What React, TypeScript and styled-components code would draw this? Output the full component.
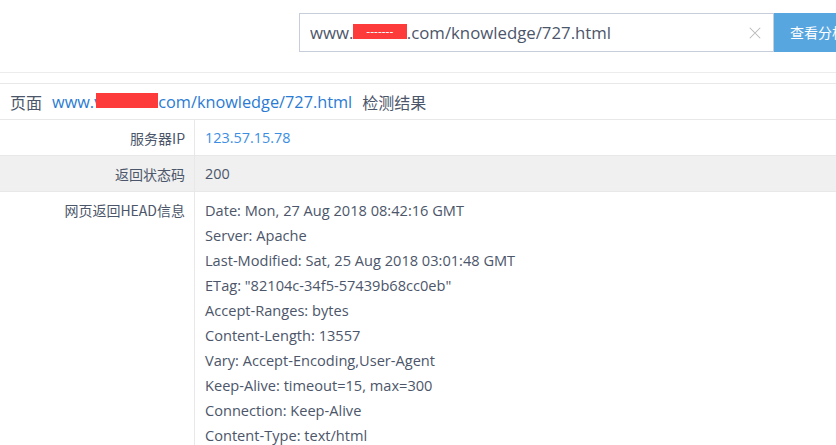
import styled, { createGlobalStyle } from 'styled-components';

const GlobalStyle = createGlobalStyle`
  html, body {
    margin: 0;
    padding: 0;
    background: #fff;
    overflow: hidden;
  }
  body {
    font-family: "Open Sans", "Noto Sans CJK SC", sans-serif;
    color: #4c566a;
  }
`;

const headers = [
  'Date: Mon, 27 Aug 2018 08:42:16 GMT',
  'Server: Apache',
  'Last-Modified: Sat, 25 Aug 2018 03:01:48 GMT',
  'ETag: "82104c-34f5-57439b68cc0eb"',
  'Accept-Ranges: bytes',
  'Content-Length: 13557',
  'Vary: Accept-Encoding,User-Agent',
  'Keep-Alive: timeout=15, max=300',
  'Connection: Keep-Alive',
  'Content-Type: text/html',
];

const App = () => (
  <Page>
    <GlobalStyle />
    <TopBar>
      <SearchBox>
        <InputText>
          www.v<Mask>-------</Mask>.com/knowledge/727.html
        </InputText>
        <ClearIcon viewBox="0 0 16 16">
          <path d="M2 2L14 14M14 2L2 14" stroke="#b8b8b8" strokeWidth="1.2" />
        </ClearIcon>
      </SearchBox>
      <SearchButton>查看分析</SearchButton>
    </TopBar>
    <Result>
      <Title>
        页面
        <TitleLink>
          www.v<Mask $inline>-------</Mask>com/knowledge/727.html
        </TitleLink>
        检测结果
      </Title>
      <Row>
        <Label>服务器IP</Label>
        <Value $blue>123.57.15.78</Value>
      </Row>
      <Row $shaded>
        <Label>返回状态码</Label>
        <Value>200</Value>
      </Row>
      <Row>
        <Label>网页返回HEAD信息</Label>
        <HeadList>
          {headers.map((h) => (
            <HeadLine key={h}>{h}</HeadLine>
          ))}
        </HeadList>
      </Row>
    </Result>
  </Page>
);

const Page = styled.div`
  width: 836px;
  height: 445px;
  overflow: hidden;
`;

const TopBar = styled.div`
  display: flex;
  justify-content: flex-end;
  height: 73px;
  padding-top: 13px;
  box-sizing: border-box;
  border-bottom: 1px solid #ececec;
  margin-right: -70px;
`;

const SearchBox = styled.div`
  width: 475px;
  height: 39px;
  box-sizing: border-box;
  border: 1px solid #c6cedb;
  display: flex;
  align-items: center;
  padding: 0 10px;
  position: relative;
`;

const InputText = styled.div`
  flex: 1;
  font-size: 16.8px;
  color: #4c566a;
  white-space: nowrap;
`;

const Mask = styled.span<{ $inline?: boolean }>`
  display: inline-block;
  background: #fe3b3b;
  color: #fff;
  font-size: 12px;
  line-height: 15px;
  height: 15px;
  width: ${(p) => (p.$inline ? '62px' : '54px')};
  margin-left: ${(p) => (p.$inline ? '-6px' : '-9px')};
  text-align: center;
  vertical-align: 0px;
  overflow: hidden;
  ${(p) => p.$inline && 'color: transparent;'}
`;

const ClearIcon = styled.svg`
  width: 14px;
  height: 14px;
  margin-right: 1px;
`;

const SearchButton = styled.div`
  width: 132px;
  height: 39px;
  background: #58a6e0;
  color: #fff;
  font-size: 14px;
  line-height: 39px;
  padding-left: 16px;
  box-sizing: border-box;
  font-family: "Noto Sans CJK SC", sans-serif;
`;

const Result = styled.div`
  margin-top: 10px;
  border-top: 1px solid #e8e8e8;
`;

const Title = styled.div`
  height: 35px;
  display: flex;
  align-items: center;
  gap: 10px;
  padding-left: 10px;
  font-size: 16px;
  color: #4c566a;
  border-bottom: 1px solid #e8e8e8;
  font-family: "Noto Sans CJK SC", sans-serif;
`;

const TitleLink = styled.span`
  color: #2a7bd3;
  font-family: "Open Sans", sans-serif;
  font-size: 16.3px;
  white-space: nowrap;
`;

const Row = styled.div<{ $shaded?: boolean }>`
  display: grid;
  grid-template-columns: 195px 1fr;
  background: ${(p) => (p.$shaded ? '#f0f0f0' : '#fff')};
  border-bottom: 1px solid #e8e8e8;
`;

const Label = styled.div`
  text-align: right;
  padding: 9px 9px 0 0;
  min-height: 35px;
  box-sizing: border-box;
  font-size: 14px;
  line-height: 18px;
  border-right: 1px solid #e8e8e8;
  font-family: "Noto Sans CJK SC", sans-serif;
  white-space: nowrap;
`;

const Value = styled.div<{ $blue?: boolean }>`
  padding: 9px 10px 0 10px;
  font-size: 14.4px;
  line-height: 18px;
  color: ${(p) => (p.$blue ? '#3c8ee2' : '#4c566a')};
`;

const HeadList = styled.div`
  padding: 6px 10px 0 10px;
  display: flex;
  flex-direction: column;
`;

const HeadLine = styled.div`
  font-size: 14.6px;
  line-height: 25px;
  white-space: nowrap;
`;

export default App;
